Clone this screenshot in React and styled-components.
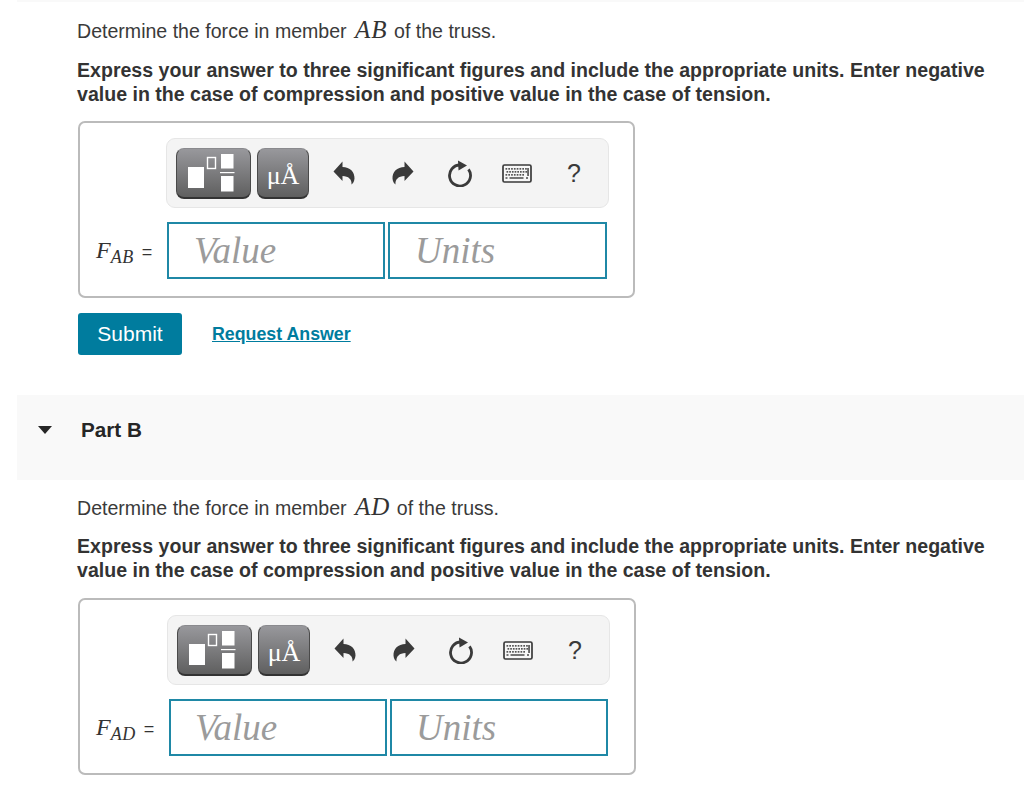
import React from "react";
import styled, { createGlobalStyle } from "styled-components";

const Global = createGlobalStyle`
  html, body { margin: 0; padding: 0; background: #fff; overflow: hidden; }
  body { font-family: "Liberation Sans", Arial, sans-serif; color: #333; }
`;

const Page = styled.div`
  width: 1024px;
  height: 785px;
  overflow: hidden;
`;
const Band = styled.div`
  margin-left: 17px;
  margin-top: ${(p) => p.$top || 0}px;
  height: ${(p) => p.$h}px;
  background: #f9f9f9;
  display: flex;
  align-items: flex-start;
`;
const Arrow = styled.span`
  width: 0;
  height: 0;
  margin: 31px 0 0 21px;
  border-left: 7.5px solid transparent;
  border-right: 7.5px solid transparent;
  border-top: 8px solid #262626;
`;
const PartTitle = styled.h2`
  margin: 22px 0 0 29px;
  font-size: 20.7px;
  line-height: 26px;
  font-weight: 700;
  color: #262626;
`;
const Section = styled.section`
  padding: ${(p) => p.$top}px 30px 0 77px;
`;
const Prompt = styled.p`
  margin: 0;
  font-size: 19.57px;
  line-height: 28px;
  color: #3a3a3a;
`;
const MathVar = styled.i`
  font-family: "Liberation Serif", serif;
  font-size: 25px;
  letter-spacing: 1px;
  margin: 0 1px 0 3px;
  color: #333;
`;
const Instruction = styled.p`
  margin: ${(p) => p.$gap}px 0 0;
  font-size: 19.57px;
  line-height: 24px;
  font-weight: 700;
  color: #333;
`;
const AnswerBox = styled.div`
  box-sizing: border-box;
  margin: ${(p) => p.$gap}px 0 0 1px;
  width: ${(p) => p.$w}px;
  height: 177px;
  border: 2px solid #bbb;
  border-radius: 7px;
  padding: 15px 0 0 ${(p) => p.$inset}px;
`;
const Toolbar = styled.div`
  box-sizing: border-box;
  width: 443px;
  height: 70px;
  background: #f4f4f4;
  border: 1.5px solid #e6e6e6;
  border-radius: 9px;
  display: flex;
  align-items: center;
  padding-left: 9px;
`;
const DarkButton = styled.div`
  box-sizing: border-box;
  width: ${(p) => p.$w}px;
  height: 51px;
  margin-right: 6px;
  border-radius: 8px;
  border: 1px solid #4a4a4a;
  border-top-color: #8a8a8e;
  border-bottom: 2px solid #333;
  background: linear-gradient(#98989c, #5f5f5f);
  display: flex;
  align-items: center;
  justify-content: center;
  padding-top: ${(p) => p.$textDrop || 0}px;
  color: #fff;
  font-family: "Liberation Serif", serif;
  font-size: 26px;
  line-height: 1;
  flex: none;
`;
const IconSlot = styled.div`
  width: ${(p) => p.$w}px;
  margin-left: ${(p) => p.$gap}px;
  display: flex;
  justify-content: center;
  flex: none;
`;
const HelpMark = styled.span`
  font-size: 25px;
  line-height: 1;
  color: #3a3a3a;
`;
const FieldRow = styled.div`
  display: flex;
  align-items: center;
  margin-top: 14px;
  margin-left: ${(p) => p.$labelShift}px;
`;
const Label = styled.div`
  width: ${(p) => p.$w}px;
  flex: none;
  font-family: "Liberation Serif", serif;
  font-style: italic;
  font-size: 24px;
  color: #333;
  white-space: nowrap;
`;
const LabelSub = styled.sub`
  font-size: 18px;
  letter-spacing: 0.5px;
  vertical-align: -5px;
  line-height: 0;
`;
const Equals = styled.span`
  font-family: "Liberation Sans", sans-serif;
  font-style: normal;
  font-size: 18px;
  margin-left: 8px;
`;
const Field = styled.div`
  box-sizing: border-box;
  width: ${(p) => p.$w}px;
  height: 57px;
  margin-right: 3px;
  border: 2px solid #1f88a6;
  padding-left: ${(p) => p.$pad}px;
  font-family: "Liberation Serif", serif;
  font-style: italic;
  font-size: 37px;
  line-height: 53px;
  color: #9b9b9b;
  flex: none;
`;
const Actions = styled.div`
  display: flex;
  align-items: center;
  margin: 15px 0 0 1px;
`;
const SubmitButton = styled.button`
  width: 104px;
  height: 42px;
  border: none;
  border-radius: 3px;
  background: #007c9e;
  color: #fff;
  font-family: inherit;
  font-size: 21px;
  padding: 0;
`;
const AnswerLink = styled.a`
  margin-left: 30px;
  color: #007c9e;
  font-size: 17.8px;
  font-weight: 700;
  text-decoration: underline;
`;

const UndoIcon = ({ flip }) => (
  <svg width="22" height="24" viewBox="0 0 22 24" style={flip ? { transform: "scaleX(-1)" } : undefined}>
    <path d="M0.5 10.5 L9.5 0.5 V6 C17 6 21.8 11 21.5 17.5 C21.3 20.5 20 22.5 18.5 23.5 C19 18.5 15.5 15 9.5 15 V20 Z" fill="#3a3a3a" />
  </svg>
);
const ResetIcon = () => (
  <svg width="26" height="28" viewBox="0 0 26 28">
    <path d="M13 6 A10.5 10.5 0 1 0 21.5 10.3" fill="none" stroke="#3a3a3a" strokeWidth="2.8" />
    <path d="M11 1.5 L20 6.5 L11.5 11.5 Z" fill="#3a3a3a" />
  </svg>
);
const KeyboardIcon = () => {
  const keys = [];
  for (let i = 0; i < 8; i++) keys.push(<rect key={"a" + i} x={3.5 + i * 2.8} y="4" width="1.7" height="1.7" />);
  for (let i = 0; i < 8; i++) keys.push(<rect key={"b" + i} x={4.5 + i * 2.7} y="7" width="1.7" height="1.7" />);
  for (let i = 0; i < 7; i++) keys.push(<rect key={"c" + i} x={3.5 + i * 2.8} y="10" width="1.7" height="1.7" />);
  return (
    <svg width="30" height="19" viewBox="0 0 30 19">
      <rect x="1" y="1" width="28" height="17" rx="1.5" fill="#f7f7f7" stroke="#3a3a3a" strokeWidth="1.7" />
      <g fill="#555">
        {keys}
        <rect x="3.5" y="13.2" width="2" height="1.6" />
        <rect x="7.5" y="13.2" width="14" height="1.6" />
        <rect x="24" y="13.2" width="2" height="1.6" />
        <rect x="25.2" y="4" width="1.7" height="8" />
      </g>
    </svg>
  );
};
const TemplateIcon = () => (
  <svg width="72" height="48" viewBox="0 0 72 48">
    <rect x="10" y="18" width="16" height="21" fill="#fff" />
    <rect x="29.5" y="8.5" width="8" height="11" fill="none" stroke="#fff" strokeWidth="1.4" />
    <rect x="43" y="5" width="12.5" height="14.5" fill="#fff" />
    <rect x="42" y="23" width="14.5" height="1.2" fill="#fff" />
    <rect x="43" y="27" width="12.5" height="15.5" fill="#fff" />
  </svg>
);

const Answer = ({ sub, width, inset, labelShift, labelWidth, boxGap, unitsWidth, fieldPad }) => (
  <AnswerBox $w={width} $inset={inset} $gap={boxGap}>
    <Toolbar>
      <DarkButton $w={75}><TemplateIcon /></DarkButton>
      <DarkButton $w={52} $textDrop={6}>μÅ</DarkButton>
      <IconSlot $w={22} $gap={18}><UndoIcon /></IconSlot>
      <IconSlot $w={22} $gap={37}><UndoIcon flip /></IconSlot>
      <IconSlot $w={26} $gap={33}><ResetIcon /></IconSlot>
      <IconSlot $w={30} $gap={29}><KeyboardIcon /></IconSlot>
      <IconSlot $w={20} $gap={32}><HelpMark>?</HelpMark></IconSlot>
    </Toolbar>
    <FieldRow $labelShift={labelShift}>
      <Label $w={labelWidth}>F<LabelSub>{sub}</LabelSub><Equals>=</Equals></Label>
      <Field $w={218} $pad={fieldPad}>Value</Field>
      <Field $w={unitsWidth} $pad={fieldPad}>Units</Field>
    </FieldRow>
  </AnswerBox>
);

const Problem = ({ member, top, instructionGap, children }) => (
  <Section $top={top}>
    <Prompt>Determine the force in member <MathVar>{member}</MathVar> of the truss.</Prompt>
    <Instruction $gap={instructionGap}>
      Express your answer to three significant figures and include the appropriate units. Enter negative
      value in the case of compression and positive value in the case of tension.
    </Instruction>
    {children}
  </Section>
);

export default function App() {
  return (
    <Page>
      <Global />
      <Band $h={2} />
      <Problem member="AB" top={14} instructionGap={13}>
        <Answer sub="AB" width={557} inset={86} labelShift={-70} labelWidth={71} boxGap={15} unitsWidth={219} fieldPad={25} />
        <Actions>
          <SubmitButton>Submit</SubmitButton>
          <AnswerLink href="#">Request Answer</AnswerLink>
        </Actions>
      </Problem>
      <Band $h={85} $top={40}>
        <Arrow />
        <PartTitle>Part B</PartTitle>
      </Band>
      <Problem member="AD" top={13} instructionGap={12}>
        <Answer sub="AD" width={558} inset={87} labelShift={-71} labelWidth={73} boxGap={16} unitsWidth={218} fieldPad={24} />
      </Problem>
    </Page>
  );
}
